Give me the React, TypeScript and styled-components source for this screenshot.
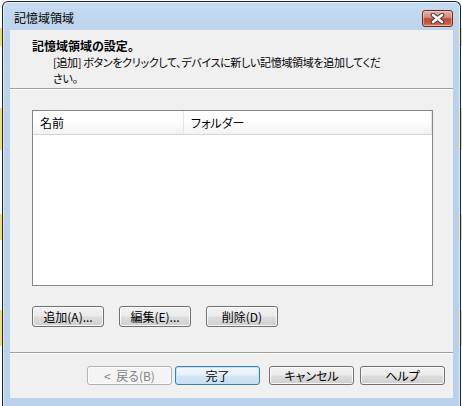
import styled, { createGlobalStyle } from "styled-components";

const GlobalStyle = createGlobalStyle`
  html, body {
    margin: 0;
    padding: 0;
  }
  body {
    width: 462px;
    height: 406px;
    overflow: hidden;
    background: #ffffff;
    font-family: "Noto Sans CJK JP", "Liberation Sans", sans-serif;
    font-size: 12px;
    font-feature-settings: "palt";
    color: #000;
  }
`;

const Desktop = styled.div`
  height: 406px;
  box-sizing: border-box;
  padding: 1px 0 0 2px;
  background: linear-gradient(
    to bottom,
    #fff 0 28px,
    #f3dc7a 28px 46px,
    #fff 46px 108px,
    #f3dc7a 108px 150px,
    #fff 150px 214px,
    #f3dc7a 214px 240px,
    #fff 240px 310px,
    #f3dc7a 310px 346px,
    #fff 346px
  );
`;

const Window = styled.div`
  width: 459px;
  height: 420px;
  box-sizing: border-box;
  display: flex;
  flex-direction: column;
  padding: 0 7px;
  border: 1px solid #1d2733;
  border-bottom: none;
  border-radius: 6px 6px 0 0;
  background: linear-gradient(to bottom, #c6dbf0 0, #bcd3eb 30px, #b9d1ea 120px, #b9d1ea 100%);
  box-shadow: inset 1px 1px 0 rgba(255, 255, 255, 0.55), inset -1px 0 0 rgba(255, 255, 255, 0.55);
`;

const TitleBar = styled.div`
  height: 28px;
  flex: none;
  display: flex;
  align-items: flex-start;
`;

const Caption = styled.span`
  margin: 8px 0 0 4px;
  line-height: 15px;
  color: #000;
`;

const CloseButton = styled.button`
  margin: 8px 0 0 auto;
  width: 31px;
  height: 17px;
  padding: 0;
  display: flex;
  align-items: center;
  justify-content: center;
  border: 1px solid #6b2a22;
  border-radius: 3px;
  background: linear-gradient(to bottom, #e6b1a4 0%, #d58b7b 42%, #c24a36 52%, #cd5c46 85%, #dd8b74 100%);
  box-shadow: inset 0 0 0 1px rgba(255, 230, 220, 0.45);
`;

const Client = styled.div`
  height: 368px;
  flex: none;
  display: flex;
  flex-direction: column;
  background: #f0f0f0;
`;

const Header = styled.div`
  height: 58px;
  box-sizing: border-box;
  padding: 8px 0 0 22px;
  line-height: 15px;
`;

const HeaderTitle = styled.div`
  font-weight: bold;
`;

const HeaderText = styled.div`
  margin-top: 1px;
  padding-left: 21px;
  font-size: 11px;
  line-height: 16px;
  letter-spacing: -0.32px;
`;

const Rule = styled.div`
  height: 1px;
  flex: none;
  background: #a0a0a0;
  border-bottom: 1px solid #ffffff;
`;

const Body = styled.div`
  padding: 20px 20px 0 22px;
`;

const ListView = styled.div`
  height: 176px;
  box-sizing: border-box;
  border: 1px solid #828790;
  background: #ffffff;
`;

const ListHeader = styled.div`
  height: 24px;
  box-sizing: border-box;
  display: flex;
  border-bottom: 1px solid #d5d5d5;
  background: linear-gradient(to bottom, #ffffff 0%, #ffffff 45%, #f1f2f4 100%);
`;

const Column = styled.div<{ $width?: number }>`
  ${({ $width }) => ($width ? `width: ${$width}px;` : "flex: 1;")}
  box-sizing: border-box;
  padding-left: 7px;
  line-height: 23px;
  border-right: 1px solid #e3e5e8;
`;

const ButtonRow = styled.div<{ $top: number; $justify?: string }>`
  display: flex;
  justify-content: ${({ $justify }) => $justify ?? "flex-start"};
  padding-top: ${({ $top }) => $top}px;
`;

const Footer = styled.div`
  margin-top: auto;
  height: 46px;
`;

const FooterButtons = styled(ButtonRow)`
  padding-right: 8px;
`;

const Button = styled.button<{ $w: number; $h: number; $gap?: number; $default?: boolean }>`
  width: ${({ $w }) => $w}px;
  height: ${({ $h }) => $h}px;
  margin-left: ${({ $gap }) => $gap ?? 0}px;
  padding: 0;
  font: inherit;
  line-height: ${({ $h }) => $h - 2}px;
  color: #000;
  white-space: pre;
  border: 1px solid ${({ $default }) => ($default ? "#3c7fb1" : "#707070")};
  border-radius: 3px;
  background: ${({ $default }) =>
    $default
      ? "linear-gradient(to bottom, #f0f7fc 0%, #e6f1f9 48%, #d4e6f3 52%, #c9dff0 100%)"
      : "linear-gradient(to bottom, #f2f2f2 0%, #ebebeb 48%, #dddddd 52%, #cfcfcf 100%)"};
  box-shadow: inset 0 0 0 1px ${({ $default }) => ($default ? "#bfe3f7" : "rgba(255, 255, 255, 0.8)")};

  &:disabled {
    color: #838383;
    border-color: #adb2b5;
    background: #f4f4f4;
    box-shadow: inset 0 0 0 1px #fcfcfc;
  }
`;

const CloseGlyph = () => (
  <svg width="15" height="11" viewBox="0 0 15 11">
    <path d="M3 2 L12 9 M12 2 L3 9" stroke="#4a3a3a" strokeWidth="4.6" strokeLinecap="round" />
    <path d="M3 2 L12 9 M12 2 L3 9" stroke="#ffffff" strokeWidth="2.6" strokeLinecap="round" />
  </svg>
);

export default function App() {
  return (
    <>
      <GlobalStyle />
      <Desktop>
        <Window>
          <TitleBar>
            <Caption>記憶域領域</Caption>
            <CloseButton aria-label="閉じる">
              <CloseGlyph />
            </CloseButton>
          </TitleBar>
          <Client>
            <Header>
              <HeaderTitle>記憶域領域の設定。</HeaderTitle>
              <HeaderText>
                [追加] ボタンをクリックして、デバイスに新しい記憶域領域を追加してくだ
                <br />
                さい。
              </HeaderText>
            </Header>
            <Rule />
            <Body>
              <ListView>
                <ListHeader>
                  <Column $width={151}>名前</Column>
                  <Column>フォルダー</Column>
                </ListHeader>
              </ListView>
              <ButtonRow $top={20}>
                <Button $w={72} $h={21}>追加(A)...</Button>
                <Button $w={72} $h={21} $gap={15}>編集(E)...</Button>
                <Button $w={72} $h={21} $gap={15}>削除(D)</Button>
              </ButtonRow>
            </Body>
            <Footer>
              <Rule />
              <FooterButtons $top={12} $justify="flex-end">
                <Button $w={85} $h={19} disabled>
                  {"<  戻る(B)"}
                </Button>
                <Button $w={85} $h={19} $gap={3} $default>
                  完了
                </Button>
                <Button $w={85} $h={19} $gap={9}>
                  キャンセル
                </Button>
                <Button $w={85} $h={19} $gap={6}>
                  ヘルプ
                </Button>
              </FooterButtons>
            </Footer>
          </Client>
        </Window>
      </Desktop>
    </>
  );
}
